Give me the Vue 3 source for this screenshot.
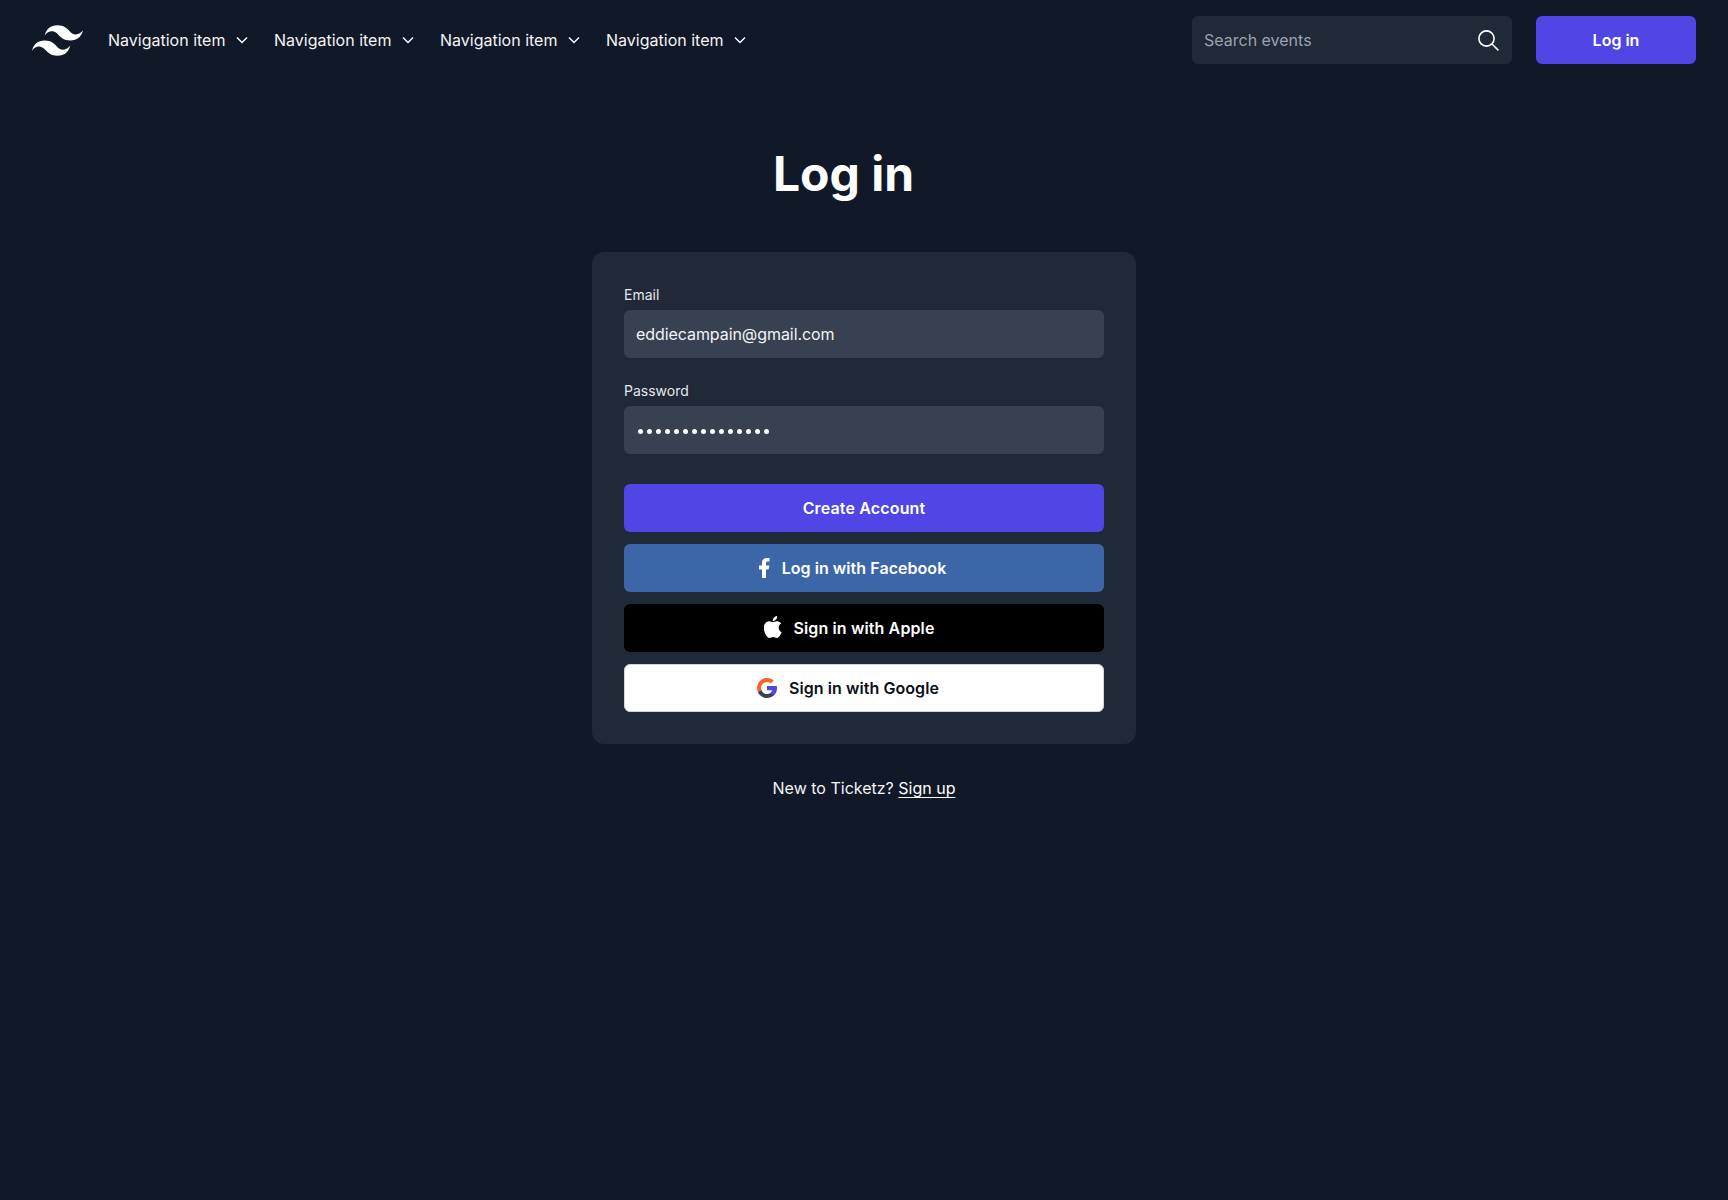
<script setup>
const navItems = ['Navigation item', 'Navigation item', 'Navigation item', 'Navigation item']
</script>

<template>
  <div class="page">
    <header class="header">
      <svg class="logo" viewBox="0 4.8 24 14.4" fill="#fff" aria-label="logo">
        <path d="M12.001 4.8c-3.2 0-5.2 1.6-6 4.8 1.2-1.6 2.6-2.2 4.2-1.8.913.228 1.565.89 2.288 1.624C13.666 10.618 15.027 12 18.001 12c3.2 0 5.2-1.6 6-4.8-1.2 1.6-2.6 2.2-4.2 1.8-.913-.228-1.565-.89-2.288-1.624C16.337 6.182 14.976 4.8 12.001 4.8zm-6 7.2c-3.2 0-5.2 1.6-6 4.8 1.2-1.6 2.6-2.2 4.2-1.8.913.228 1.565.89 2.288 1.624 1.177 1.194 2.538 2.576 5.512 2.576 3.2 0 5.2-1.6 6-4.8-1.2 1.6-2.6 2.2-4.2 1.8-.913-.228-1.565-.89-2.288-1.624C10.337 13.382 8.976 12 6.001 12z" />
      </svg>
      <nav class="nav">
        <a v-for="(item, i) in navItems" :key="i" class="nav-item">
          <span>{{ item }}</span>
          <svg class="chev" viewBox="0 0 14.6 8" fill="none" stroke="#fff" stroke-width="1.4">
            <path d="M2 1.5 7 6.5l5-5" />
          </svg>
        </a>
      </nav>
      <div class="spacer"></div>
      <div class="search">
        <span class="placeholder">Search events</span>
        <svg class="search-icon" viewBox="0 0 21 21" fill="none" stroke="#fff" stroke-width="1.6">
          <circle cx="8.5" cy="8.5" r="7.6" />
          <path d="m14 14 6.4 6.4" />
        </svg>
      </div>
      <button class="btn header-btn">Log in</button>
    </header>

    <main class="main">
      <h1 class="title">Log in</h1>
      <form class="card" @submit.prevent>
        <label class="label">Email</label>
        <div class="input email">eddiecampain@gmail.com</div>
        <label class="label pw-label">Password</label>
        <div class="input password">
          <i v-for="n in 15" :key="n" class="dot"></i>
        </div>
        <button class="btn primary">Create Account</button>
        <button class="btn facebook">
          <svg class="icon icon-f" viewBox="7 2 10.5 20" fill="#fff"><path d="M14 13.5h2.5l1-4H14v-2c0-1.03 0-2 2-2h1.5V2.14c-.326-.043-1.557-.14-2.857-.14C11.928 2 10 3.657 10 6.7v2.8H7v4h3V22h4v-8.5z" /></svg>
          <span>Log in with Facebook</span>
        </button>
        <button class="btn apple">
          <svg class="icon icon-a" viewBox="3 .85 17.6 22.2" fill="#fff"><path d="M11.6734 7.22198C10.7974 7.22198 9.44138 6.22598 8.01338 6.26198C6.12938 6.28598 4.40138 7.35397 3.42938 9.04597C1.47338 12.442 2.92538 17.458 4.83338 20.218C5.76938 21.562 6.87338 23.074 8.33738 23.026C9.74138 22.966 10.2694 22.114 11.9734 22.114C13.6654 22.114 14.1454 23.026 15.6334 22.99C17.1454 22.966 18.1054 21.622 19.0294 20.266C20.0974 18.706 20.5414 17.194 20.5654 17.11C20.5294 17.098 17.6254 15.982 17.5894 12.622C17.5654 9.81397 19.8814 8.46998 19.9894 8.40998C18.6694 6.47798 16.6414 6.26198 15.9334 6.21398C14.0854 6.06998 12.5374 7.22198 11.6734 7.22198ZM14.7934 4.38998C15.5734 3.45398 16.0894 2.14598 15.9454 0.849976C14.8294 0.897976 13.4854 1.59398 12.6814 2.52998C11.9614 3.35798 11.3374 4.68998 11.5054 5.96198C12.7414 6.05798 14.0134 5.32598 14.7934 4.38998Z" /></svg>
          <span>Sign in with Apple</span>
        </button>
        <button class="btn google">
          <svg class="icon icon-g" viewBox="1 1 22 22">
            <path fill="#4f46e5" d="M23 12.25c0-.8-.07-1.6-.2-2.4H12v4.6h5.7c-.26 1.3-1 2.3-2 3v3h3.6c2.4-2 3.7-4.9 3.7-8.2z" />
            <path fill="#374151" d="M12 23c2.97 0 5.46-.98 7.28-2.66l-3.57-2.77c-.98.66-2.23 1.06-3.71 1.06-2.86 0-5.29-1.93-6.16-4.53H2.18v2.84C3.99 20.53 7.7 23 12 23z" />
            <path fill="#f9622b" d="M5.84 14.09c-.22-.66-.35-1.36-.35-2.09s.13-1.43.35-2.09V7.07H2.18C1.43 8.55 1 10.22 1 12s.43 3.45 1.18 4.93l2.85-2.22.81-.62z" />
            <path fill="#f9622b" d="M12 5.38c1.62 0 3.06.56 4.21 1.64l3.15-3.15C17.45 2.09 14.97 1 12 1 7.7 1 3.99 3.47 2.18 7.07l3.66 2.84c.87-2.6 3.3-4.53 6.16-4.53z" />
          </svg>
          <span>Sign in with Google</span>
        </button>
      </form>
      <p class="signup">New to Ticketz? <a class="link">Sign up</a></p>
    </main>
  </div>
</template>

<style>
html, body { margin: 0; background: #111827; }
</style>

<style scoped>
.page {
  min-height: 1200px;
  background: #111827;
  color: #fff;
  font-family: Inter, "Liberation Sans", sans-serif;
  font-size: 16px;
  line-height: 24px;
}
.header {
  display: flex;
  align-items: center;
  height: 80px;
  padding: 0 32px;
}
.logo { width: 51px; height: 31px; flex: none; }
.nav { display: flex; gap: 24px; margin-left: 25px; }
.nav-item { display: flex; align-items: center; gap: 10px; color: #f3f4f6; }
.chev { width: 14.6px; height: 8px; }
.spacer { flex: 1; }
.search {
  display: flex;
  align-items: center;
  justify-content: space-between;
  box-sizing: border-box;
  width: 320px;
  height: 48px;
  padding: 0 13px 0 12px;
  background: #1f2937;
  border-radius: 6px;
}
.placeholder { color: #9ca3af; }
.search-icon { width: 21px; height: 21px; }
.btn {
  display: flex;
  align-items: center;
  justify-content: center;
  gap: 12px;
  width: 100%;
  height: 48px;
  border: 0;
  border-radius: 6px;
  padding: 0;
  font: 600 16px/24px Inter, "Liberation Sans", sans-serif;
  color: #fff;
  background: #4f46e5;
}
.header-btn { width: 160px; margin-left: 24px; }
.main { display: flex; flex-direction: column; align-items: center; }
.title {
  margin: 64px 41px 48px 0;
  font-size: 48px;
  line-height: 60px;
  font-weight: 700;
}
.card {
  display: flex;
  flex-direction: column;
  box-sizing: border-box;
  width: 544px;
  padding: 32px;
  background: #1f2937;
  border-radius: 12px;
}
.label { font-size: 14px; line-height: 20px; color: #e5e7eb; margin: 1px 0 5px; }
.pw-label { margin-top: 23px; }
.input {
  display: flex;
  align-items: center;
  height: 48px;
  padding: 0 12px;
  background: #374151;
  border-radius: 6px;
  color: #f3f4f6;
}
.email { letter-spacing: -0.07px; }
.password { gap: 4px; padding: 2px 0 0 14px; box-sizing: border-box; }
.dot { width: 5px; height: 5px; border-radius: 50%; background: #fff; }
.primary { margin-top: 30px; letter-spacing: 0.15px; }
.facebook { margin-top: 12px; background: #3b67a9; letter-spacing: 0.05px; }
.apple { margin-top: 12px; background: #000; letter-spacing: 0.12px; }
.google { margin-top: 12px; background: #fff; color: #0b0f19; letter-spacing: 0.06px; box-sizing: border-box; border: 1px solid #d1d5db; }
.icon { flex: none; }
.icon-f { width: 10.5px; height: 20px; margin-left: -22.5px; }
.icon-a { width: 18px; height: 22px; margin: -3px 0 0 -30px; }
.icon-g { width: 20px; height: 20px; margin-left: -32px; }
.signup { margin: 32px 0 0; color: #f3f4f6; text-align: center; }
.link { color: #fff; text-decoration: underline; text-underline-offset: 3px; }
</style>
